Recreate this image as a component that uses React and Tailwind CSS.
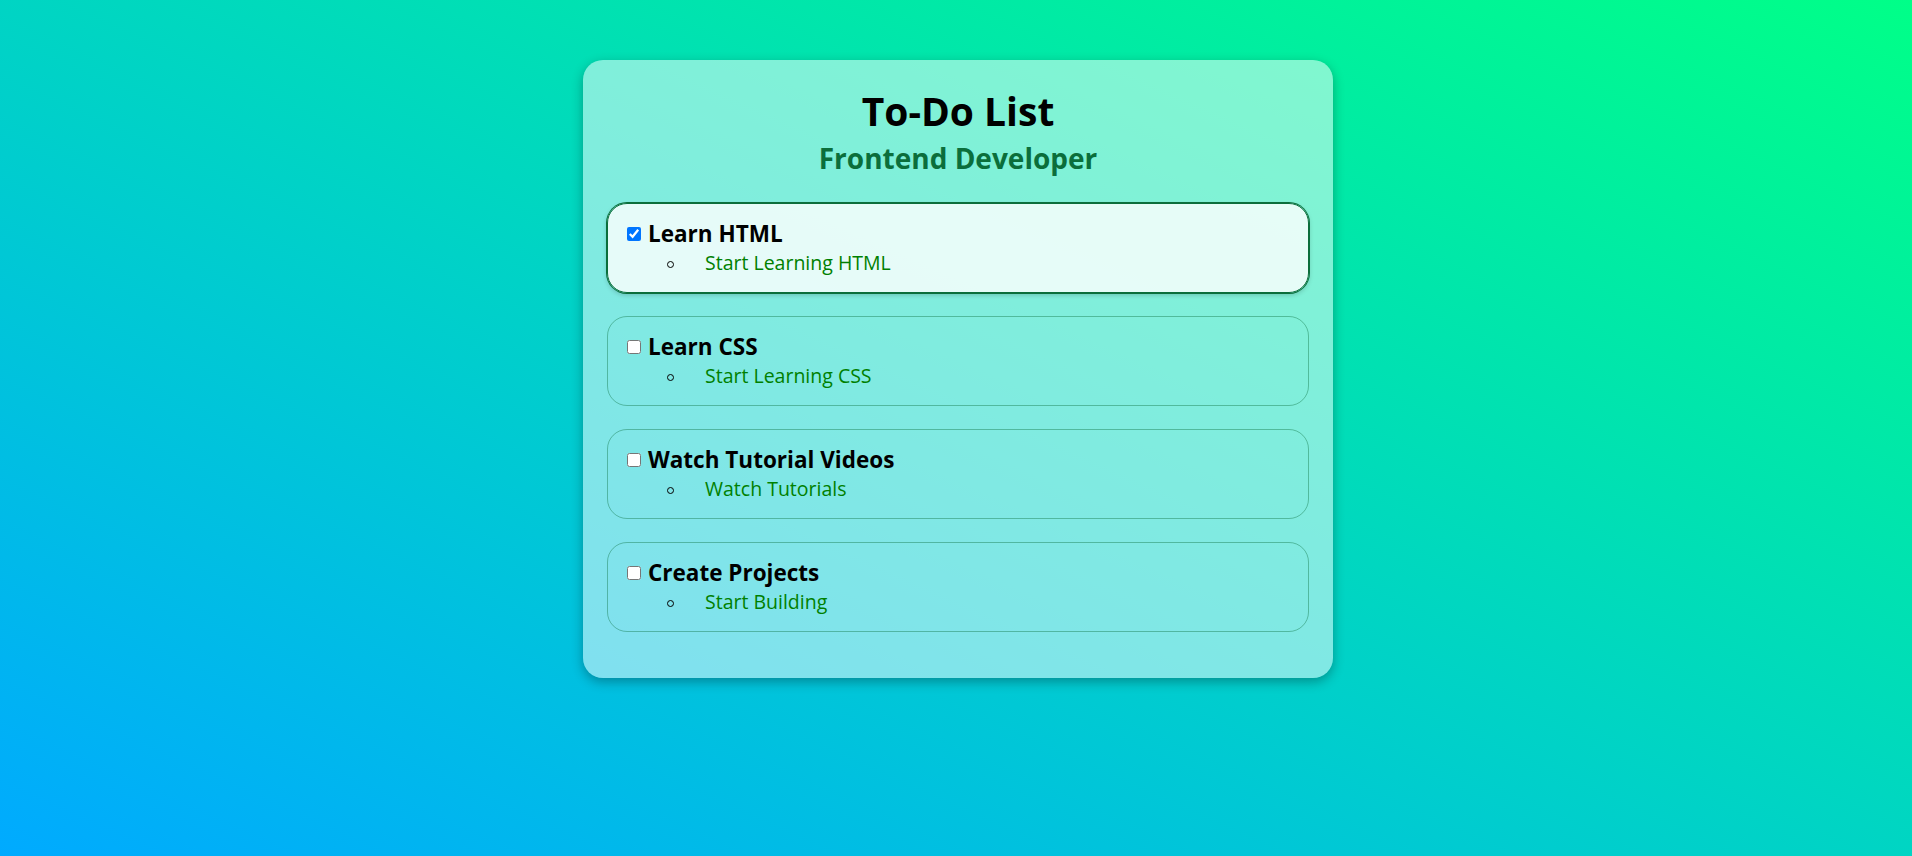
import React, { useState } from 'react';

const initialTasks = [
  { id: 1, title: 'Learn HTML', step: 'Start Learning HTML', done: true },
  { id: 2, title: 'Learn CSS', step: 'Start Learning CSS', done: false },
  { id: 3, title: 'Watch Tutorial Videos', step: 'Watch Tutorials', done: false },
  { id: 4, title: 'Create Projects', step: 'Start Building', done: false },
];

function TaskItem({ task, onToggle }) {
  return (
    <li
      className={`mb-[23px] rounded-[20px] border px-[15px] pt-[15px] pb-[16px] ${
        task.done
          ? 'border-[#0b6e3b] bg-white/80 ring-1 ring-[#0b6e3b] shadow-[0_2px_5px_rgba(0,0,0,0.2)]'
          : 'border-[#0b6e3b]/40'
      }`}
    >
      <label className="flex items-center">
        <input
          type="checkbox"
          checked={task.done}
          onChange={() => onToggle(task.id)}
          className="ml-[4px] mr-[7px] h-[14px] w-[14px]"
        />
        <h3 className="text-[22.5px] leading-[30px] font-bold text-black">{task.title}</h3>
      </label>
      <ul>
        <li className="flex items-center">
          <span className="ml-[44px] mt-[3px] h-[7px] w-[7px] rounded-full border border-black" />
          <span className="ml-[31px] text-[19.5px] leading-[27px] text-[#008000]">{task.step}</span>
        </li>
      </ul>
    </li>
  );
}

export default function App() {
  const [tasks, setTasks] = useState(initialTasks);

  const toggle = (id) =>
    setTasks((prev) => prev.map((t) => (t.id === id ? { ...t, done: !t.done } : t)));

  return (
    <div className="min-h-screen bg-[linear-gradient(to_top_right,#00aaff,#00ff88)] pl-[4px] pt-[60px] font-['Open_Sans',sans-serif]">
      <div className="mx-auto w-[750px] rounded-[20px] bg-white/50 px-6 pt-[27px] pb-[23px] shadow-[0_4px_12px_rgba(0,0,0,0.3)]">
        <h1 className="text-center text-[39px] leading-[48px] font-bold text-black">To-Do List</h1>
        <h2 className="mt-[6px] text-center text-[28px] leading-[35px] font-bold text-[#0b6e3b]">
          Frontend Developer
        </h2>
        <ul className="mt-[27px]">
          {tasks.map((task) => (
            <TaskItem key={task.id} task={task} onToggle={toggle} />
          ))}
        </ul>
      </div>
    </div>
  );
}
